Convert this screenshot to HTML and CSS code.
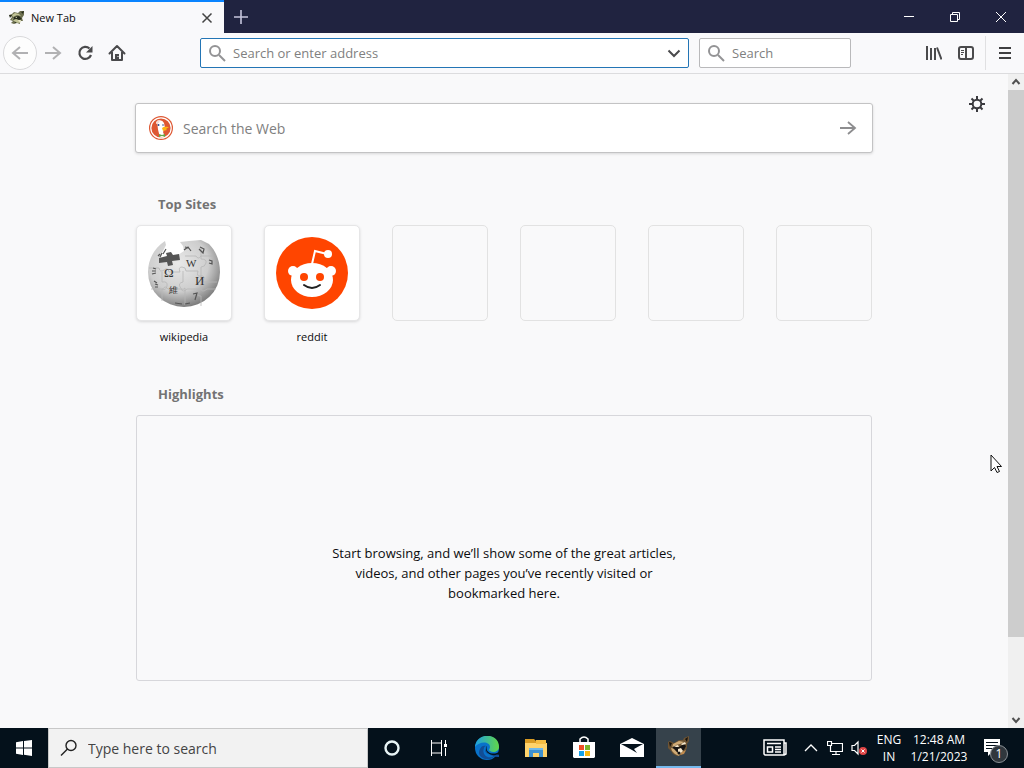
FILE: index.html
```html
<!DOCTYPE html>
<html lang="en">
<head>
<meta charset="utf-8">
<title>New Tab</title>
<link rel="stylesheet" href="styles.css">
</head>
<body>
<svg class="defs" aria-hidden="true">
  <symbol id="raccoon" viewBox="0 0 24 24">
    <path d="M1 7 3 6l4 2 5-3 4 0 1-2 5-2 0 5-2 3 0 4-2 4-4 3-4 1-4-2-2-3-3-3z" fill="#6e5433"/>
    <path d="m2 7 3 1-2 4zM18 4l3-2-1 5z" fill="#17130f"/>
    <path d="m6 9 6-3 5 1-4 2-4 1-4 3zM4 13l4 1 2 3 3 2-1 2-4-2-3-3z" fill="#d0ab76"/>
    <path d="m5 12 5-1 2 1 5-3 2 2-2 4-3 1-1 2-3-1-3-3z" fill="#181513"/>
    <path d="m7 11 4-1 1 2-3 0zM14 9l4-2 1 2-4 1zM11 14l3-1 2 3-3 3-2-1z" fill="#f6e7cb"/>
    <circle cx="12" cy="18" r="1.500" fill="#111"/>
    <path d="m15 17 4-2-2 4-4 1z" fill="#c08a4e"/>
  </symbol>
  <symbol id="raccoon-small" viewBox="0 0 16 16">
    <path d="M0 5 3 4 5 2 9 3 11 1 15 1 15 5 13 8 14 11 11 11 11 14 8 13 5 14 2 13 4 11 1 10 3 7z" fill="#6d7050"/>
    <path d="m3 5 3-2 4 1 2 2-4-1-4 2zM3 9l2-1 4 1 3 3-3 1-4-2z" fill="#c2c497"/>
    <path d="M0 5h3L1 8zm5 2 5-1 3 3-3 1-3-1-3 1zm0 6 2-1v1zM12 2l3-1-1 3z" fill="#262a1c"/>
    <path d="m6 7 2 0 0 1zM9 10l3 0-1 3z" fill="#e8e6c5"/>
  </symbol>
  <symbol id="lens" viewBox="0 0 18 18">
    <circle cx="7" cy="7" r="5" fill="none" stroke="currentColor" stroke-width="2"/>
    <path d="m11 11 6 6" stroke="currentColor" stroke-width="2"/>
  </symbol>
</svg>

<header class="tabs">
  <div class="tab">
    <svg class="i16" aria-hidden="true"><use href="#raccoon-small"/></svg>
    <span class="tab-title">New Tab</span>
    <button class="tab-close" aria-label="Close tab"><svg class="i16" viewBox="0 0 16 16"><path d="m3.500 3.500 9 9m0-9-9 9" stroke="#444" stroke-width="1.500"/></svg></button>
  </div>
  <button class="new-tab" aria-label="Open a new tab"><svg class="i16" viewBox="0 0 16 16"><path d="M8 1v14M1 8h14" stroke="#c5c5dc" stroke-width="1.600"/></svg></button>
  <div class="window-buttons">
    <button aria-label="Minimize"><svg class="i16" viewBox="0 0 16 16"><path d="M3 7.500h10" stroke="#fff"/></svg></button>
    <button aria-label="Restore"><svg class="i16" viewBox="0 0 16 16"><path d="M3.500 5.500h7v7h-7zM5.500 5.500v-2h7v7h-2" fill="none" stroke="#fff"/></svg></button>
    <button aria-label="Close"><svg class="i16" viewBox="0 0 16 16"><path d="m3 3 10 10m0-10L3 13" stroke="#fff"/></svg></button>
  </div>
</header>

<nav class="toolbar">
  <div class="nav-buttons">
    <button class="back" aria-label="Back"><svg class="i20" viewBox="0 0 20 20"><path d="M18 10H3m7-6-7 6 7 6" fill="none" stroke="#b1b1b3" stroke-width="2"/></svg></button>
    <button aria-label="Forward"><svg class="i20" viewBox="0 0 20 20"><path d="M2 10h15m-7-6 7 6-7 6" fill="none" stroke="#b1b1b3" stroke-width="2"/></svg></button>
    <button aria-label="Reload"><svg class="i20" viewBox="0 0 20 20"><path d="M14.500 5.500A6 6 0 1 0 16 12" fill="none" stroke="#4a4a4c" stroke-width="2.200"/><path d="M17.500 3v6.500H11z" fill="#4a4a4c"/></svg></button>
    <button aria-label="Home"><svg class="i20" viewBox="0 0 20 20"><path d="M2.500 10.500 10 3l7.500 7.500M5 9v8h10V9" fill="none" stroke="#4a4a4c" stroke-width="2" stroke-linejoin="round" stroke-linecap="round"/><path d="M8 11h4v6H8z" fill="#4a4a4c"/><path d="M10.500 13.500h1" stroke="#fff"/></svg></button>
  </div>
  <div class="address field focused">
    <svg class="i18"><use href="#lens"/></svg>
    <input type="text" aria-label="Address" placeholder="Search or enter address">
    <button aria-label="Show history"><svg class="i16" viewBox="0 0 16 16"><path d="m2.500 5.500 5.500 5.500 5.500-5.500" fill="none" stroke="#4a4a4c" stroke-width="2"/></svg></button>
  </div>
  <div class="searchbar field">
    <svg class="i18"><use href="#lens"/></svg>
    <input type="text" aria-label="Search" placeholder="Search">
  </div>
  <div class="tools">
    <button aria-label="Library"><svg class="i16" viewBox="0 0 16 16"><path d="M1 1v14M5 3v12M9 3v12M11 2.500 15.500 14.500" stroke="#4a4a4c" stroke-width="2"/></svg></button>
    <button aria-label="Sidebars"><svg class="i16" viewBox="0 0 16 16"><rect x="1" y="2" width="14" height="12" rx="2" fill="none" stroke="#4a4a4c" stroke-width="2"/><path d="M8 2v12" stroke="#4a4a4c" stroke-width="2"/><path d="M3 5.500h3M3 7.500h3M3 9.500h2" stroke="#4a4a4c"/></svg></button>
    <button class="menu" aria-label="Menu"><svg class="i16" viewBox="0 0 16 16"><path d="M2 3h12M2 8h12M2 13h12" stroke="#3f3f41" stroke-width="2"/></svg></button>
  </div>
</nav>

<div class="viewport">
  <main class="page">
    <button class="settings" aria-label="Customize"><svg class="i16" viewBox="0 0 16 16"><circle cx="8" cy="8" r="4.300" fill="none" stroke="#3a3a3e" stroke-width="2"/><path d="M8 0v4M8 12v4M0 8h4M12 8h4M2.500 2.500 5 5M11 11l2.500 2.500M13.500 2.500 11 5M5 11l-2.500 2.500" stroke="#3a3a3e" stroke-width="2"/></svg></button>
    <form class="websearch">
      <svg class="i24" viewBox="0 0 24 24"><circle cx="12" cy="12" r="12" fill="#de5833"/><circle cx="12" cy="12" r="10.200" fill="none" stroke="#fff" stroke-width="1.200"/><path d="M8 5q5-2 7 2l1 5-2 4 2 5-5 .500-2-8z" fill="#fff"/><path d="M7 6q1-2 4-2l-1 3-3 1z" fill="#f5ded7"/><circle cx="9.500" cy="9" r="1" fill="#2d4f8e"/><circle cx="14" cy="9" r=".800" fill="#2d4f8e"/><path d="M13 12q2-2 7-1l-3 2 1 1-4 1z" fill="#fdb515"/><path d="m10 18 3 1 3-1v3l-3-1-3 1z" fill="#65a847"/></svg>
      <input type="text" aria-label="Search the Web" placeholder="Search the Web">
      <button aria-label="Submit search"><svg class="i20" viewBox="0 0 20 20"><path d="M2 10h15m-7-6 7 6-7 6" fill="none" stroke="#8d8d8f" stroke-width="1.800"/></svg></button>
    </form>

    <section class="topsites">
      <h2>Top Sites</h2>
      <div class="tiles">
        <a class="site" href="#wikipedia">
          <span class="tile">
            <svg viewBox="1 1 94 94" aria-hidden="true">
              <defs><radialGradient id="globe" cx=".42" cy=".35" r=".7"><stop offset="0" stop-color="#e9e9e9"/><stop offset=".600" stop-color="#cdcdcd"/><stop offset="1" stop-color="#6f6f6f"/></radialGradient></defs>
              <path d="m29 16 1 4-4 8-1 5 9-1 8-2 6-4-1-5-3-4 9-1 12-1 8 4C80 26 84 36 84 47a36 35 0 0 1-72 0c0-13 7-25 17-31z" fill="url(#globe)"/>
              <path d="m23 33 8-2-1-3 5-1 2 3 6-1 1 6-8 1 1 4-5 1-1-4-8 1z" fill="#555"/>
              <path d="M13 43h10q1 5 5 2t5 2h11q-2-5 2-5t4 4h12q-2 6 3 5t2 6h14M26 47v10q6-1 5 4t-5 3v12M47 46v11q-5 1-3 5t5 1v17M65 22v12q6 0 5 4t-5 4v22q-5 0-4 4t4 3v10M15 64h12q2-4 5 0h13q2 4 6 0h14q1 4 6 0h9M49 31h11q2 4 5 0h12" fill="none" stroke="#b6b6b6" stroke-width=".8"/>
              <g class="globe-letters" fill="#333"><text x="28" y="52">Ω</text><text class="mid" x="50" y="42">W</text><text x="59" y="60">И</text><text class="small" x="33" y="68">維</text></g>
              <path d="m17 43 3 1m-4 2 4 0m-4 3 4-1m-2 8 3 2m-2 1 3 1m-3 2 3 0m0-31 2-2m0 3 2-4m1 1 3-5m19-2 4 1m-5 2 4-3 3 4m9-4 4 2-1 4-4-4m10 11 3 1 0 3-3-1m-16 31 4-1-2 7M39 78l7 1m3 0 5-1" fill="none" stroke="#555" stroke-width="1.200"/>
            </svg>
          </span>
          <span class="label">wikipedia</span>
        </a>
        <a class="site" href="#reddit">
          <span class="tile">
            <svg viewBox="1 1 94 94" aria-hidden="true"><circle cx="48" cy="48" r="36" fill="#ff4500"/><circle cx="29" cy="46" r="5" fill="#fff"/><circle cx="67" cy="46" r="5" fill="#fff"/><ellipse cx="48" cy="55" rx="21" ry="17" fill="#fff"/><path d="m48 39 3-13 12 3" fill="none" stroke="#fff" stroke-width="2"/><circle cx="64" cy="29" r="4" fill="#fff"/><circle cx="40" cy="52" r="4" fill="#ff4500"/><circle cx="56" cy="52" r="4" fill="#ff4500"/><path d="M40 60q8 6 16 0" fill="none" stroke="#222" stroke-width="2" stroke-linecap="round"/></svg>
          </span>
          <span class="label">reddit</span>
        </a>
        <span class="tile empty"></span>
        <span class="tile empty"></span>
        <span class="tile empty"></span>
        <span class="tile empty"></span>
      </div>
    </section>

    <section class="highlights">
      <h2>Highlights</h2>
      <div class="empty-state"><p>Start browsing, and we’ll show some of the great articles, videos, and other pages you’ve recently visited or bookmarked here.</p></div>
    </section>
  </main>
  <div class="scrollbar" aria-hidden="true">
    <svg class="i16" viewBox="0 0 16 16"><path d="m4.500 10 3.500-4 3.500 4" fill="none" stroke="#505050" stroke-width="2"/></svg>
    <div class="track"><div class="thumb"></div></div>
    <svg class="i16" viewBox="0 0 16 16"><path d="m4.500 6 3.500 4 3.500-4" fill="none" stroke="#505050" stroke-width="2"/></svg>
  </div>
  <svg class="pointer" viewBox="0 0 12 20" aria-hidden="true"><path d="M1 1v16l3.500-3.500 2.500 5 2.500-1-2.500-5h4.500z" fill="#fff" stroke="#111"/></svg>
</div>

<footer class="taskbar">
  <button class="start" aria-label="Start"><svg class="i16" viewBox="0 0 16 16"><path d="M0 2.200 7 1v6.500H0zM8 .900 16 0v7.500H8zM0 8.500h7V15l-7-1.200zM8 8.500h8V16l-8-1.200z" fill="#fff"/></svg></button>
  <label class="tasksearch">
    <svg class="i18" viewBox="0 0 18 18"><circle cx="11" cy="6.500" r="5" fill="none" stroke="#222" stroke-width="1.400"/><path d="M7.500 10 1 16.500" stroke="#222" stroke-width="1.400"/></svg>
    <input type="text" aria-label="Type here to search" placeholder="Type here to search">
  </label>
  <div class="apps">
    <button aria-label="Cortana"><svg class="i24" viewBox="0 0 24 24"><circle cx="12" cy="12" r="6.500" fill="none" stroke="#e8f4f5" stroke-width="2.400"/></svg></button>
    <button aria-label="Task View"><svg class="i24" viewBox="0 0 24 24"><path d="M4.500 4v3h10V4M4.500 20v-3h10v3M4.500 7v10M14.500 7v10M18.500 4v4M18.500 12v8" fill="none" stroke="#fff"/><path d="M17 8h3v3h-3z" fill="#fff"/></svg></button>
    <button class="edge" aria-label="Edge"><svg class="i24" viewBox="0 0 24 24"><defs><linearGradient id="edge-a"><stop stop-color="#1c9fe5"/><stop offset="1" stop-color="#62d747"/></linearGradient></defs><circle cx="12" cy="12" r="12" fill="#0872ca"/><path d="M0 11C1-4 24-4 24 11c0 5-6 6-9 4-2-1 0-2 0-4 0-6-11-6-15 0z" fill="url(#edge-a)"/><path d="M9 12c-3 8 6 13 13 6-7 10-22 4-17-5 1-3 4-4 6-3-1 0-2 1-2 2z" fill="#114d95"/><path d="M11 10c-4 7 4 11 11 7l3-1-1 5c-4 0-11-2-13-6-1-2-1-3 0-5z" fill="#114d95"/><path d="M12 10c-2 5 3 9 10 7l3-2v4l-3-.500c-4 2-11-1-11-5 0-2 0-3 1-3.500z" fill="#04111b"/></svg></button>
    <button aria-label="File Explorer"><svg class="i24" viewBox="0 0 24 24"><path d="M1 3h9l2 2h10v3H1z" fill="#d99b23"/><path d="M1 7h22v14H1z" fill="#ffd36b"/><path d="M12 4h10v4H12z" fill="#f7bd42"/><path d="M5 13h14v8h-4v-4H9v4H5z" fill="#3f91d0"/><path d="M5 12h14v2H5z" fill="#70b9ea"/></svg></button>
    <button aria-label="Store"><svg class="i24" viewBox="0 0 24 24"><path d="M1 6h22v15l-1 1H2l-1-1z" fill="#fff"/><path d="M8 6V3q4-4 8 0v3" fill="#04111b" stroke="#fff" stroke-width="1.500"/><path d="M7 9h5v5H7z" fill="#ef4f25"/><path d="M13 9h5v5h-5z" fill="#7cb529"/><path d="M7 15h5v5H7z" fill="#16a1e8"/><path d="M13 15h5v5h-5z" fill="#f8b812"/></svg></button>
    <button aria-label="Mail"><svg class="i24" viewBox="0 0 24 24"><path d="M0 8 12 2l12 6v13H0z" fill="#fff"/><path d="M1 8h22l-9 5 3 4-5-3z" fill="#04111b"/></svg></button>
    <button class="running" aria-label="Browser"><svg class="i24"><use href="#raccoon"/></svg></button>
  </div>
  <div class="tray">
    <button class="news" aria-label="News"><svg class="i24" viewBox="0 0 24 24"><path d="M1 4h20v15H2l-1-1zM21 7h2v11l-2 1" fill="none" stroke="#fff" stroke-width="1.500"/><path d="M4 7.500h14M12 11h6M12 13.500h6M12 16h6M4.500 11h5v5h-5z" fill="none" stroke="#fff" stroke-width="1.500"/></svg></button>
    <button aria-label="Show hidden icons"><svg class="i16" viewBox="0 0 16 16"><path d="m2 11 6-6 6 6" fill="none" stroke="#fff" stroke-width="1.300"/></svg></button>
    <button aria-label="Network"><svg class="i16" viewBox="0 0 16 16"><path d="M5 3.500h10.500v8H3.500V6M.500 1.500h4v4h-4zM9 12v2.500M5 14.500h8" fill="none" stroke="#fff" stroke-width="1.200"/></svg></button>
    <button aria-label="Volume muted"><svg class="i16" viewBox="0 0 16 16"><path d="M1 5.500h2.500L7 2v12l-3.500-3.500H1z" fill="none" stroke="#fff" stroke-width="1.200"/><circle cx="12" cy="11" r="4" fill="#df4545"/><path d="m10.500 9.500 3 3m0-3-3 3" stroke="#fff"/></svg></button>
    <button class="stack lang"><span>ENG</span><span>IN</span></button>
    <button class="stack clock"><span>12:48 AM</span><span>1/21/2023</span></button>
    <button class="notices" aria-label="Notifications"><svg class="i24" viewBox="0 0 24 24"><path d="M4 3h16v13h-8l-4 4v-4H4z" fill="#fff"/><path d="M6 6.500h12M6 9.500h12M6 12.500h8" stroke="#04111b"/></svg><span class="count">1</span></button>
  </div>
</footer>
</body>
</html>
```
FILE: styles.css
```css
* { box-sizing: border-box; }
body {
  margin: 0;
  height: 100vh;
  display: flex;
  flex-direction: column;
  overflow: hidden;
  background: #f9f9fa;
  color: #0c0c0d;
  font-family: "Open Sans", "Noto Sans", sans-serif;
  font-size: 12px;
}
button {
  display: flex;
  align-items: center;
  justify-content: center;
  padding: 0;
  border: 0;
  background: none;
  color: inherit;
  font: inherit;
}
input {
  flex: 1;
  min-width: 0;
  padding: 0;
  border: 0;
  outline: 0;
  background: none;
  font: inherit;
}
input::placeholder { color: #808080; opacity: 1; }
svg { display: block; flex: none; }
.defs { position: absolute; width: 0; height: 0; }
.i16 { width: 16px; height: 16px; }
.i18 { width: 18px; height: 18px; }
.i20 { width: 20px; height: 20px; }
.i24 { width: 24px; height: 24px; }

.tabs { display: flex; flex: none; height: 33px; background: #202340; }
.tab {
  display: flex;
  align-items: center;
  width: 224px;
  gap: 6px;
  padding: 0 9px;
  border-top: 2px solid #0a84ff;
  background: #f9f9fb;
}
.tab-title { flex: 1; font-size: 11px; }
.new-tab { width: 34px; }
.window-buttons { display: flex; margin-left: auto; }
.window-buttons button { width: 46px; }

.toolbar {
  display: flex;
  flex: none;
  align-items: center;
  height: 41px;
  border-bottom: 1px solid #dcdcde;
  background: #f9f9fb;
}
.nav-buttons { display: flex; align-items: center; width: 200px; padding-left: 3px; }
.nav-buttons button { width: 32px; height: 34px; }
.nav-buttons .back { width: 34px; border: 1px solid #d9d9db; border-radius: 50%; background: #fdfdfd; }
.field {
  display: flex;
  align-items: center;
  height: 30px;
  gap: 7px;
  padding: 0 6px 0 7px;
  border: 1px solid #b9b9bb;
  border-radius: 2px;
  background: #fff;
  color: #939395;
  font-size: 13px;
}
.field.focused { border-color: #2375b5; }
.address { flex: 1; }
.searchbar { width: 152px; margin-left: 10px; }
.tools { display: flex; justify-content: flex-end; width: 173px; }
.tools button { width: 32px; height: 34px; }
.tools .menu { width: 39px; margin-left: 3px; border-left: 1px solid #e0e0e2; }

.viewport { position: relative; display: flex; flex: 1; min-height: 0; }
.page { position: relative; flex: 1; padding: 29px 32px 0; overflow: hidden; }
.settings { position: absolute; top: 22px; right: 23px; }
.websearch {
  display: flex;
  align-items: center;
  max-width: 738px;
  height: 50px;
  margin: 0 auto;
  gap: 10px;
  padding: 0 14px 0 13px;
  border: 1px solid #c3c3c4;
  border-radius: 3px;
  background: #fff;
  box-shadow: 0 1px 3px #0002;
  font-size: 14px;
}
.topsites, .highlights { max-width: 736px; margin: 0 auto; }
.topsites { padding-top: 41px; }
.highlights { padding-top: 37px; }
h2 { margin: 0 0 11px; padding-left: 22px; color: #737373; font-size: 13px; line-height: 20px; font-weight: 700; }
.tiles { display: flex; gap: 32px; }
.site { width: 96px; color: inherit; text-align: center; text-decoration: none; }
.tile {
  display: block;
  width: 96px;
  height: 96px;
  border: 1px solid #e6e6e7;
  border-radius: 5px;
  background: #fff;
  box-shadow: 0 1px 3px #0002;
}
.tile.empty { border-color: #e2e2e2; background: none; box-shadow: none; }
.label { display: block; padding-top: 6px; font-size: 11px; line-height: 20px; }
.globe-letters { font: 13px "Liberation Serif", serif; }
.globe-letters .mid { font-size: 11px; }
.globe-letters .small { font-size: 9px; }
.empty-state {
  display: flex;
  align-items: center;
  justify-content: center;
  height: 266px;
  padding-top: 50px;
  border: 1px solid #d7d7db;
  border-radius: 3px;
}
.empty-state p { width: 350px; margin: 0; font-size: 13px; line-height: 20px; text-align: center; }

.scrollbar { display: flex; flex-direction: column; width: 16px; background: #f0f0f0; }
.track { flex: 1; }
.thumb { height: 88%; background: #cdcdcd; }
.pointer { position: absolute; top: 380px; right: 22px; width: 12px; height: 20px; }

.taskbar {
  display: flex;
  flex: none;
  height: 40px;
  background: #04111b;
  color: #fff;
}
.start { width: 48px; }
.tasksearch {
  display: flex;
  align-items: center;
  width: 320px;
  gap: 10px;
  padding-left: 11px;
  border: 1px solid #c8c8c8;
  background: #f2f2f2;
  font-size: 14px;
}
.tasksearch input::placeholder { color: #444; }
.apps { display: flex; }
.apps button { width: 48px; }
.apps .edge { width: 50px; }
.apps .running { width: 45px; border-bottom: 2px solid #76b9ed; background: #36424b; }
.apps button:nth-child(-n+2) { width: 47px; }
.tray { display: flex; margin-left: auto; padding-right: 12px; }
.tray button { width: 24px; }
.tray .news { width: 48px; }
.tray .stack { flex-direction: column; line-height: 17px; }
.tray .lang { width: 36px; }
.tray .clock { width: 64px; }
.tray .notices { position: relative; width: 41px; }
.count {
  position: absolute;
  right: 4px;
  bottom: 5px;
  width: 18px;
  height: 18px;
  border: 1px solid #8b9196;
  border-radius: 50%;
  background: #30373d;
  font-size: 12px;
  line-height: 16px;
}
```
